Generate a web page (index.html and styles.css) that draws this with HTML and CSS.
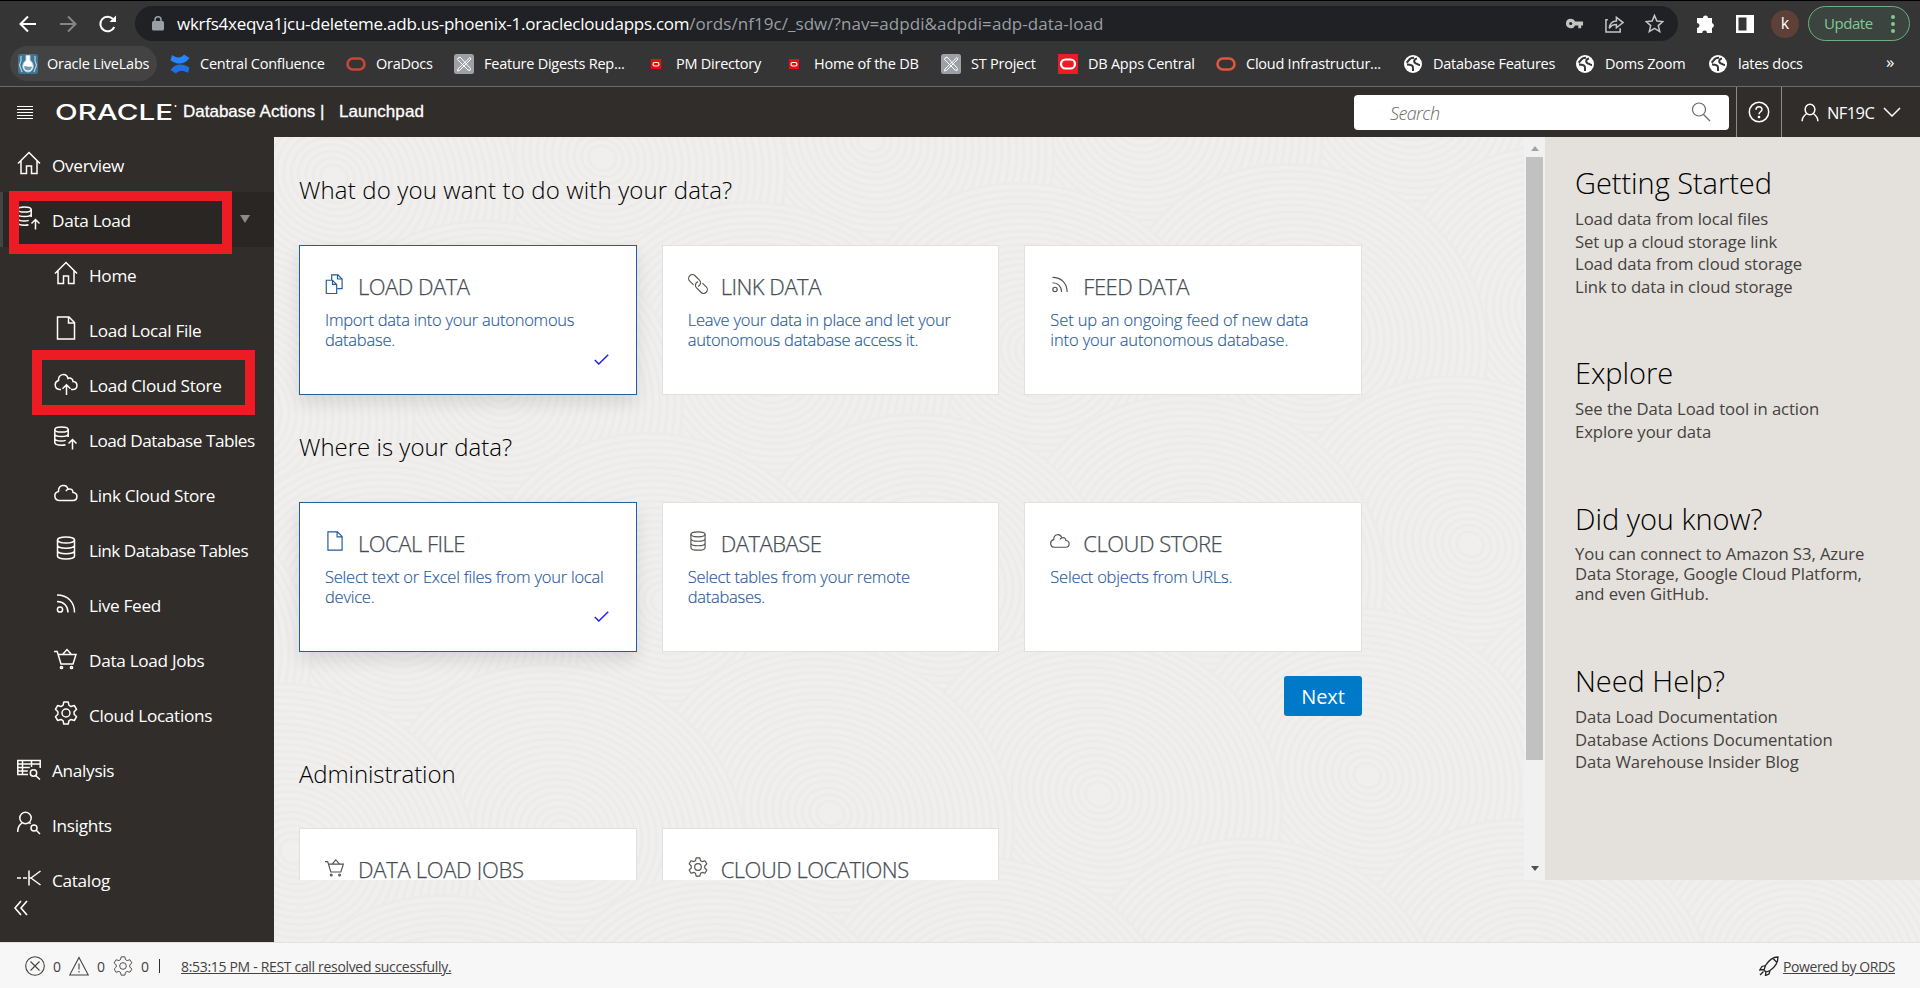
FILE: index.html
```html
<!DOCTYPE html>
<html lang="en">
<head>
<meta charset="utf-8">
<title>Database Actions | Launchpad</title>
<link rel="stylesheet" href="styles.css">
</head>
<body>
<svg class="defs" aria-hidden="true">
  <symbol id="home" viewBox="0 0 24 24"><path d="M1 12.5 12 1.5l11 11M4 10v12.5h5.5V15h5v7.5H20V10"/></symbol>
  <symbol id="file" viewBox="0 0 24 24"><path d="M3.500 1h11.500l5.500 5.500V23H3.500zM14.500 1v6h6"/></symbol>
  <symbol id="copy" viewBox="0 0 24 24"><path d="M1.500 7.500h7.500l5 5V23.500H1.500zM9 7.500v5h5M8 7V1h7.500l5 5V17.500H15M15 1v5h5.500"/></symbol>
  <symbol id="dbup" viewBox="0 0 24 24"><ellipse cx="7.500" cy="3.500" rx="6.700" ry="2.600"/><path d="M.8 3.500V16.500c0 1.600 3 2.700 6.700 2.700 1.600 0 3-.2 4-.5M14.200 3.500V11M.8 8c0 1.500 3 2.500 6.700 2.500S14.200 9.500 14.200 8M.8 12.500c0 1.500 3 2.500 6.700 2.500 1.600 0 3-.2 4.200-.6M18.500 23.500v-9.500M14.500 17.500l4-4 4 4"/></symbol>
  <symbol id="db" viewBox="0 0 24 24"><ellipse cx="12" cy="4" rx="8.500" ry="3"/><path d="M3.500 4v16c0 1.700 3.800 3 8.500 3s8.500-1.300 8.500-3V4M3.500 9.300c0 1.700 3.800 3 8.500 3s8.500-1.300 8.500-3M3.500 14.700c0 1.700 3.800 3 8.500 3s8.500-1.300 8.500-3"/></symbol>
  <symbol id="cloud" viewBox="0 0 24 24"><path d="M5.500 19.500a4.600 4.600 0 0 1-1-9.100C4.200 3.500 12.500 2.300 14 8.300c2.800-1.200 5 .6 5 3.100 5.500.5 5 8.100 0 8.100zM14 8.300c-1 .4-1.700 1-2.100 1.800"/></symbol>
  <symbol id="cloudup" viewBox="0 0 24 24"><path d="M7 18.500H5.500a4.600 4.600 0 0 1-1-9C4.200 2.500 12.500 1.500 14 7.500c2.800-1.200 5 .6 5 3.100 5.500.5 5 7.900 0 7.900h-2M12.500 24V14M8.500 17.800l4-4 4 4"/></symbol>
  <symbol id="feed" viewBox="0 0 24 24"><circle cx="6" cy="18.500" r="2.600"/><path d="M3 10.500c6.500 0 11 4.500 11 11M3 4c10.500 0 17.500 7 17.500 17.500"/></symbol>
  <symbol id="cart" viewBox="0 0 24 24"><path d="M0 5.500h3.200L7 18h12l3-9.500H4.300M8.500 8.500 13 3.500 17.500 8.500"/><circle cx="7.500" cy="21.500" r="1.100"/><circle cx="17.500" cy="21.500" r="1.100"/></symbol>
  <symbol id="gear" viewBox="0 0 24 24"><circle cx="12" cy="12" r="4"/><path d="M9.800 1h4.400l.8 3.400 2 1.100 3.300-1 2.300 3.800-2.500 2.500v2.400l2.500 2.500-2.300 3.800-3.300-1-2 1.100-.8 3.400H9.800L9 19.600l-2-1.100-3.300 1-2.300-3.800 2.500-2.500v-2.400L1.400 8.300l2.300-3.800 3.300 1 2-1.100z" stroke-linejoin="round"/></symbol>
  <symbol id="analysis" viewBox="0 0 24 24"><path d="M11 18.500H.8V4.500h22.400V12M.8 8h22.400M.8 11.500h12M.8 15h10M5.500 4.500v14M14.500 4.500V11M18.500 19.500l4.500 4"/><circle cx="16.500" cy="17" r="3.200"/></symbol>
  <symbol id="insights" viewBox="0 0 24 24"><circle cx="8.500" cy="7" r="5.700"/><path d="M.7 21c0-5 1.500-7.300 4.300-8.900M12.500 11.500l1 1.300M19 19l4 4"/><circle cx="17" cy="17" r="3"/></symbol>
  <symbol id="catalog" viewBox="0 0 24 24"><path d="M0 12h4M6 12h4M12 4.500v15M12 12h2M14 12 23.500 5M14 12 23.500 19"/></symbol>
  <symbol id="link" viewBox="0 0 24 24"><g transform="rotate(45 12 12)"><path d="M9 16.500H2.500a4.500 4.500 0 0 1 0-9H10a4.500 4.500 0 0 1 4 6.500M15 7.500h6.500a4.500 4.500 0 0 1 0 9H14a4.500 4.500 0 0 1-4-6.500"/></g></symbol>
  <symbol id="person" viewBox="0 0 24 24"><ellipse cx="12" cy="8" rx="6.500" ry="7"/><path d="M1.500 23.500c0-5 3-8 6.500-10.500M22.500 23.500c0-5-3-8-6.500-10.500"/></symbol>
  <symbol id="oval" viewBox="0 0 20 14"><rect x="1.500" y="1.500" width="17" height="11" rx="5.500"/></symbol>
  <symbol id="tools" viewBox="0 0 20 20"><rect width="20" height="20" rx="2.500" fill="#9da1a5" stroke="none"/><path d="M4 4l2-1 10.500 11.500-.5 2-2-.5L3.500 5.500zM16 3.500 4 15l-.5 2 2-.5L17 5z" fill="none" stroke="#fff"/></symbol>
  <symbol id="globe" viewBox="0 0 20 20"><circle cx="10" cy="10" r="9" fill="#fff" stroke="none"/><path d="M11 3.800C5.500 3.500 6 7.500 3.500 8.500M4 10.500c3 0 6 .5 6 3v3.500M14 4.500c-3.500.5-3.500 4-1 5 1.800.5 2.500 1.500 4 1.500" fill="none" stroke="#353535" stroke-width="2"/></symbol>
  <symbol id="rings" viewBox="-150 -150 300 300">
    <circle r="149" class="disk"/><circle r="143"/><circle r="137"/><circle r="131"/><circle r="125"/><circle r="119"/><circle r="113"/><circle r="107"/><circle r="101"/><circle r="95"/><circle r="89"/><circle r="83"/><circle r="77"/><circle r="71"/><circle r="65"/><circle r="59"/><circle r="53"/><circle r="47"/><circle r="41"/><circle r="35"/><circle r="29"/><circle r="23"/><circle r="17"/><circle r="11"/>
  </symbol>
</svg>

<div class="browser">
  <div class="toolbar">
    <svg class="nav-ico" viewBox="0 0 20 20"><path d="M18 10H3M10 2.500 2.500 10l7.500 7.500"/></svg>
    <svg class="nav-ico dim" viewBox="0 0 20 20"><path d="M2 10h15M10 2.500 17.500 10 10 17.500"/></svg>
    <svg class="nav-ico" viewBox="0 0 20 20"><path d="M16.300 13A7.300 7.300 0 1 1 15 5"/><path d="M18 1.500V8h-6.500z" fill="#fff" stroke="none"/></svg>
    <div class="address">
      <svg class="lock" viewBox="0 0 12 15"><rect y="5" width="12" height="9.500" rx="1.500" fill="#9aa0a6"/><path d="M3 6V3.800a3 3 0 0 1 6 0V6" fill="none" stroke="#9aa0a6" stroke-width="1.500"/></svg>
      <div class="url"><span class="host">wkrfs4xeqva1jcu-deleteme.adb.us-phoenix-1.oraclecloudapps.com</span><span class="path">/ords/nf19c/_sdw/?nav=adpdi&amp;adpdi=adp-data-load</span></div>
      <svg class="addr-ico" viewBox="0 0 20 20"><path fill="#c4c4c4" stroke="none" fill-rule="evenodd" d="M6 5a5 5 0 1 0 4.600 7H14v3h3v-3h2V8h-8.400A5 5 0 0 0 6 5zm0 3.300a1.700 1.700 0 1 1 0 3.400 1.700 1.700 0 0 1 0-3.400z"/></svg>
      <svg class="addr-ico" viewBox="0 0 20 20"><path d="M3 6H1v13h15v-4M4.500 15c.5-5 3-7.500 7.500-7.700V3.500L19 9l-7 5.500V11c-3.500 0-5.500 1-7.500 4z"/></svg>
      <svg class="addr-ico" viewBox="0 0 20 20"><path d="m10 1.500 2.500 6 6.300.5-4.800 4.200 1.500 6.300L10 15.200l-5.500 3.300L6 12.200 1.200 8l6.300-.5z"/></svg>
    </div>
    <svg class="ext" viewBox="0 0 20 20"><path fill="#fff" d="M7 4a2.500 2.500 0 0 1 5 0h4v5a2.600 2.600 0 0 1 0 5v5h-5a2.400 2.400 0 0 0-4.800 0H1v-5a2.500 2.500 0 0 0 0-5V4z"/></svg>
    <svg class="panel-ico" viewBox="0 0 18 18"><path fill="#fff" fill-rule="evenodd" d="M0 0h18v18H0zM2.500 2.500v13h8v-13z"/></svg>
    <div class="avatar">k</div>
    <div class="update"><span>Update</span><i class="dots"><b></b><b></b><b></b></i></div>
  </div>
  <div class="bookmarks">
    <div class="bm active"><svg viewBox="0 0 20 20"><rect width="20" height="20" rx="3" fill="#3d7593"/><path d="M8 1.500h4v5c5 3 4 11-2 11.500-6-.5-7-8.500-2-11.500z" fill="#fff" stroke="#bcd3df"/><path d="M3 2v5L1.500 11 4 18M17 2v5l1.500 4L16 18" fill="none" stroke="#b5d0dd" stroke-width="1.200"/><path d="M6 12.500c2-1 4 1 8 0-.3 2.500-1.500 4-4 4s-3.700-1.500-4-4z" fill="#6e9bb1"/></svg>Oracle LiveLabs</div>
    <div class="bm"><svg viewBox="0 0 20 20"><path d="M2 1c4 3 9 3.500 12-.5L19.500 4c-5 7-12 7-19 2.500z" fill="#2684ff"/><path d="M18 19c-4-3-9-3.500-12 .5L.5 16c5-7 12-7 19-2.500z" fill="#1f6fe5"/></svg>Central Confluence</div>
    <div class="bm"><svg class="oval red"><use href="#oval"/></svg>OraDocs</div>
    <div class="bm"><svg><use href="#tools"/></svg>Feature Digests Rep...</div>
    <div class="bm"><svg viewBox="0 0 20 20"><path fill="#f20d0d" d="M5 5h10v10H5z"/><rect x="7" y="8.500" width="6" height="3.500" rx="1.700" fill="none" stroke="#fff" stroke-width="1.200"/></svg>PM Directory</div>
    <div class="bm"><svg viewBox="0 0 20 20"><path fill="#f20d0d" d="M5 5h10v10H5z"/><rect x="7" y="8.500" width="6" height="3.500" rx="1.700" fill="none" stroke="#fff" stroke-width="1.200"/></svg>Home of the DB</div>
    <div class="bm"><svg><use href="#tools"/></svg>ST Project</div>
    <div class="bm"><svg viewBox="0 0 20 20"><path fill="#ed1c24" d="M0 0h20v20H0z"/><rect x="3" y="5.500" width="14" height="9" rx="4.500" fill="none" stroke="#fff" stroke-width="2.200"/></svg>DB Apps Central</div>
    <div class="bm"><svg class="oval red2"><use href="#oval"/></svg>Cloud Infrastructur...</div>
    <div class="bm"><svg><use href="#globe"/></svg>Database Features</div>
    <div class="bm"><svg><use href="#globe"/></svg>Doms Zoom</div>
    <div class="bm"><svg><use href="#globe"/></svg>lates docs</div>
    <div class="more">»</div>
  </div>
</div>

<header class="app-header">
  <div class="burger"><i></i><i></i><i></i><i></i><i></i></div>
  <svg class="logo" viewBox="0 0 124 24"><text x="0" y="20" textLength="118" lengthAdjust="spacingAndGlyphs">ORACLE</text><circle cx="120.500" cy="6" r="1"/></svg>
  <div class="brand">Database Actions |</div>
  <div class="page-name">Launchpad</div>
  <div class="search"><span>Search</span><svg viewBox="0 0 20 20"><circle cx="8" cy="7.500" r="6.500"/><path d="m12.500 12.500 6.500 6.500"/></svg></div>
  <div class="help"><svg viewBox="0 0 22 22"><circle cx="11" cy="11" r="9.700"/><path d="M8 8.800c0-4 6-4 6-.3 0 2.300-3 2.300-3 4.800"/><circle cx="11" cy="16" r=".6"/></svg></div>
  <div class="user"><svg class="u-ico"><use href="#person"/></svg><span>NF19C</span><svg class="chev" viewBox="0 0 18 10"><path d="m1 1 8 8 8-8"/></svg></div>
</header>

<div class="workspace">
  <nav class="sidebar">
    <div class="item"><svg><use href="#home"/></svg>Overview</div>
    <div class="item selected"><svg><use href="#dbup"/></svg>Data Load<b class="caret"></b></div>
    <div class="item sub"><svg><use href="#home"/></svg>Home</div>
    <div class="item sub"><svg><use href="#file"/></svg>Load Local File</div>
    <div class="item sub"><svg><use href="#cloudup"/></svg>Load Cloud Store</div>
    <div class="item sub long"><svg><use href="#dbup"/></svg>Load Database Tables</div>
    <div class="item sub"><svg><use href="#cloud"/></svg>Link Cloud Store</div>
    <div class="item sub long"><svg><use href="#db"/></svg>Link Database Tables</div>
    <div class="item sub"><svg><use href="#feed"/></svg>Live Feed</div>
    <div class="item sub"><svg><use href="#cart"/></svg>Data Load Jobs</div>
    <div class="item sub"><svg><use href="#gear"/></svg>Cloud Locations</div>
    <div class="item"><svg><use href="#analysis"/></svg>Analysis</div>
    <div class="item"><svg><use href="#insights"/></svg>Insights</div>
    <div class="item"><svg><use href="#catalog"/></svg>Catalog</div>
    <svg class="collapse" viewBox="0 0 14 16"><path d="M7 1 1 8l6 7M13 1 7 8l6 7"/></svg>
    <div class="mark mark-load"></div>
    <div class="mark mark-cloud"></div>
  </nav>

  <div class="stage">
    <svg class="texture" width="1646" height="805">
      <defs><pattern id="waves" width="380" height="230" patternUnits="userSpaceOnUse" patternTransform="translate(60 40) rotate(24) scale(1.25 1.1)">
        <use href="#rings" x="40" y="-265" width="300" height="300"/>
        <use href="#rings" x="-150" y="-150" width="300" height="300"/><use href="#rings" x="230" y="-150" width="300" height="300"/>
        <use href="#rings" x="40" y="-35" width="300" height="300"/>
        <use href="#rings" x="-150" y="80" width="300" height="300"/><use href="#rings" x="230" y="80" width="300" height="300"/>
        <use href="#rings" x="40" y="195" width="300" height="300"/>
      </pattern></defs>
      <rect width="1646" height="805" fill="url(#waves)" stroke="none"/>
    </svg>
    <div class="panes">
      <main class="content">
        <h2 class="first">What do you want to do with your data?</h2>
        <div class="cards">
          <section class="card chosen"><div class="title"><svg><use href="#copy"/></svg>LOAD DATA</div><p>Import data into your autonomous<br>database.</p><svg class="check" viewBox="0 0 15 11"><path d="m.8 6 4 4L14.200.8"/></svg></section>
          <section class="card"><div class="title"><svg class="thin"><use href="#link"/></svg>LINK DATA</div><p>Leave your data in place and let your<br>autonomous database access it.</p></section>
          <section class="card"><div class="title"><svg><use href="#feed"/></svg>FEED DATA</div><p class="loose">Set up an ongoing feed of new data<br>into your autonomous database.</p></section>
        </div>
        <h2 class="second">Where is your data?</h2>
        <div class="cards">
          <section class="card chosen"><div class="title"><svg><use href="#file"/></svg>LOCAL FILE</div><p>Select text or Excel files from your local<br>device.</p><svg class="check" viewBox="0 0 15 11"><path d="m.8 6 4 4L14.200.8"/></svg></section>
          <section class="card"><div class="title"><svg><use href="#db"/></svg>DATABASE</div><p>Select tables from your remote<br>databases.</p></section>
          <section class="card"><div class="title"><svg><use href="#cloud"/></svg>CLOUD STORE</div><p>Select objects from URLs.</p></section>
        </div>
        <div class="actions"><button class="next">Next</button></div>
        <h2 class="third">Administration</h2>
        <div class="cards">
          <section class="card"><div class="title jobs"><svg><use href="#cart"/></svg>DATA LOAD JOBS</div></section>
          <section class="card"><div class="title"><svg><use href="#gear"/></svg>CLOUD LOCATIONS</div></section>
        </div>
      </main>
      <div class="scroll"><i class="up"></i><i class="thumb"></i><i class="down"></i></div>
      <aside class="aside">
        <h3>Getting Started</h3>
        <ul><li>Load data from local files</li><li>Set up a cloud storage link</li><li>Load data from cloud storage</li><li>Link to data in cloud storage</li></ul>
        <h3>Explore</h3>
        <ul><li>See the Data Load tool in action</li><li>Explore your data</li></ul>
        <h3>Did you know?</h3>
        <p>You can connect to Amazon S3, Azure<br>Data Storage, Google Cloud Platform,<br>and even GitHub.</p>
        <h3>Need Help?</h3>
        <ul><li>Data Load Documentation</li><li>Database Actions Documentation</li><li>Data Warehouse Insider Blog</li></ul>
      </aside>
    </div>
  </div>
</div>

<footer class="status">
  <svg viewBox="0 0 20 20"><circle cx="10" cy="10" r="9.300"/><path d="m5.500 5.500 9 9M14.500 5.500l-9 9"/></svg><span>0</span>
  <svg viewBox="0 0 20 20"><path d="M10 1.500 19.300 19H.7zM10 7.500v6M10 15v1.500"/></svg><span>0</span>
  <svg><use href="#gear"/></svg><span>0</span>
  <i class="bar"></i>
  <a class="log">8:53:15 PM - REST call resolved successfully.</a>
  <svg class="rocket" viewBox="0 0 20 20"><path d="M19 1c-5 0-8.500 2-12.500 8.500L5 14l2 2 4-1.500C17 10.500 19 6 19 1zM14 2.500 18 6.500M6.500 9.500 3 10.500.7 14l4.300-.5M11 14.500l-1 3.500-3.500 1.500L7 15.500M4.500 15.500 1 19"/></svg>
  <a class="ords">Powered by ORDS</a>
</footer>
</body>
</html>
```
FILE: styles.css
```css
* { box-sizing: border-box; }
body { margin: 0; width: 1920px; height: 988px; overflow: hidden; font-family: "Open Sans", sans-serif; background: #f0efed; white-space: nowrap; }
svg { fill: none; stroke: currentColor; flex: none; display: block; }
h2, h3, p, ul { margin: 0; padding: 0; }
li { list-style: none; }
.defs { position: absolute; width: 0; height: 0; }

/* Browser frame */
.browser { height: 87px; background: #353535; border-top: 1px solid #000; border-bottom: 1px solid #6a6a6a; color: #fff; }
.toolbar { display: flex; align-items: center; height: 45px; padding: 0 10px 0 18px; }
.nav-ico { width: 20px; height: 20px; margin-right: 20px; stroke-width: 2; }
.nav-ico.dim { color: #868686; }
.nav-ico:nth-child(3) { margin-right: 17px; }
.address { width: 1543px; height: 35px; border-radius: 18px; background: #202124; display: flex; align-items: center; padding: 0 14px 0 17px; }
.lock { width: 12px; height: 15px; margin-right: 13px; stroke: none; }
.url { flex: 1; font-size: 17px; line-height: 30px; }
.host { letter-spacing: -.26px; }
.path { color: #9a9ea3; letter-spacing: .05px; }
.addr-ico { width: 19px; height: 19px; margin-left: 21px; color: #c4c4c4; stroke-width: 1.6; }
.ext { width: 20px; height: 20px; margin-left: 18px; stroke: none; }
.panel-ico { width: 18px; height: 18px; margin-left: 20px; stroke: none; }
.avatar { width: 28px; height: 28px; margin: 0 9px 0 17px; border-radius: 50%; background: #5d4037; font-size: 16px; line-height: 27px; text-align: center; }
.update { width: 102px; height: 35px; border: 1.5px solid #6fae82; border-radius: 18px; background: #3b443f; color: #81c995; display: flex; align-items: center; padding: 0 0 2px 15px; font-size: 15px; letter-spacing: -.45px; }
.dots { display: grid; gap: 3px; margin: 2px 0 0 18px; }
.dots b { width: 4px; height: 4px; border-radius: 50%; background: #81c995; }
.bookmarks { display: grid; grid-template-columns: 152px 176px 108px 192px 138px 157px 117px 158px 187px 172px 133px 178px 30px; height: 35px; padding-left: 18px; }
.bm { display: flex; align-items: center; gap: 10px; font-size: 14.5px; letter-spacing: -.24px; height: 35px; }
.bm svg { width: 20px; height: 20px; stroke: none; }
.bm.active { margin-left: -8px; padding-left: 8px; width: 147px; border-radius: 18px; background: #434343; gap: 9px; }
.bm .oval { height: 14px; stroke-width: 2.6; }
.bm .red { stroke: #c74634; }
.bm .red2 { stroke: #e0563f; }
.more { font-size: 17px; line-height: 32px; }

/* Application header */
.app-header { height: 50px; background: #312d2a; color: #fff; display: flex; align-items: center; font: 17px "Liberation Sans", sans-serif; }
.burger { display: grid; gap: 2px; width: 16px; margin: 0 22px 0 17px; }
.burger i { height: 1px; background: #fff; }
.logo { width: 124px; height: 24px; margin-right: 4px; stroke: none; fill: #fff; }
.logo text { font: 500 22px Inter, sans-serif; }
.brand { width: 156px; letter-spacing: 0; -webkit-text-stroke: .3px #fff; }
.page-name { flex: 1; letter-spacing: .1px; -webkit-text-stroke: .3px #fff; }
.search { width: 375px; height: 35px; margin-right: 7px; border-radius: 4px; background: #fff; color: #6b6865; display: flex; align-items: center; justify-content: space-between; padding: 0 18px 0 36px; font: italic 300 18px "Open Sans", sans-serif; letter-spacing: -.6px; }
.search span { padding-top: 2px; }
.search svg { width: 20px; height: 20px; stroke-width: 1.200; }
.help { height: 50px; width: 46px; border: solid #8d8b89; border-width: 0 1px; display: flex; align-items: center; justify-content: center; }
.help svg { width: 22px; height: 22px; stroke-width: 1.500; }
.user { width: 138px; display: flex; align-items: center; padding-left: 19px; font: 16.500px "Open Sans", sans-serif; letter-spacing: -.6px; }
.u-ico { width: 18px; height: 19px; stroke-width: 2; margin-right: 8px; }
.user span { width: 56px; }
.chev { width: 18px; height: 10px; stroke-width: 1.500; }

/* Sidebar */
.workspace { display: flex; height: 805px; }
.sidebar { position: relative; width: 274px; background: #312d2a; color: #fff; }
.item { height: 55px; display: flex; align-items: center; gap: 11px; padding: 1px 0 0 17px; font-size: 17.200px; letter-spacing: -.3px; }
.item svg { width: 24px; height: 24px; stroke-width: 1.500; margin-top: -4px; }
.item.sub { padding-left: 54px; }
.item.long { letter-spacing: -.5px; }
.item.selected { background: #2a2623; border-left: 3px solid #444; padding-left: 14px; }
.caret { margin: -2px 24px 0 auto; border: solid transparent; border-width: 8px 5.500px 0; border-top-color: #8d8b89; }
.collapse { width: 14px; height: 16px; margin: -7px 0 0 14px; stroke-width: 1.600; }
.mark { position: absolute; border: 10px solid #ed1c24; width: 223px; }
.mark-load { left: 9px; top: 54px; height: 63px; }
.mark-cloud { left: 32px; top: 213px; height: 65px; }

/* Main stage */
.stage { position: relative; width: 1646px; }
.texture { position: absolute; left: 0; top: 0; }
#rings circle { stroke: #ecebe9; stroke-width: 2.200; }
#rings .disk { fill: #f0efed; }
.panes { position: relative; display: flex; height: 743px; overflow: hidden; }
.content { width: 1250px; padding: 37px 0 0 25px; }
.content h2 { font-size: 24px; font-weight: 300; line-height: 32px; color: #000; }
.content .first { letter-spacing: .14px; }
.second { margin-top: 36px; }
.third { margin-top: 42px; letter-spacing: -.1px; }
.cards { display: grid; grid-template-columns: repeat(3, 1fr); gap: 25px; width: 1063px; margin-top: 39px; }
.third + .cards { margin-top: 38px; }
.card { position: relative; height: 150px; background: #fff; border: 1px solid #dfe0e0; padding: 25px 0 0 25px; color: #1f5a9a; }
.card.chosen { border-color: #2160a0; box-shadow: 0 8px 16px rgba(0, 0, 0, .1); }
.title { display: flex; gap: 13px; font-size: 22px; font-weight: 300; line-height: 30px; letter-spacing: -.5px; color: #454c54; -webkit-text-stroke: .25px #454c54; }
.title.jobs { letter-spacing: -.3px; }
.title svg { width: 20px; height: 20px; margin-top: 3px; stroke-width: 1.400; color: #565350; }
.chosen .title svg { color: #1f5a9a; }
.card p { margin-top: 9px; font-size: 16.500px; font-weight: 300; line-height: 20px; letter-spacing: -.24px; -webkit-text-stroke: .15px #1f5a9a; }
.card .loose { letter-spacing: -.13px; }
.check { position: absolute; right: 27px; top: 108px; width: 15px; height: 11px; color: #2222ee; stroke-width: 1.500; }
.actions { display: flex; justify-content: flex-end; width: 1063px; margin-top: 24px; }
.next { width: 78px; height: 40px; padding: 1px 0 0; border: 0; border-radius: 3px; background: #0079c8; color: #fff; font: 20px "Open Sans", sans-serif; letter-spacing: -.1px; }
.scroll { width: 21px; background: #f1f1f1; display: flex; flex-direction: column; align-items: center; }
.up, .down { border: solid transparent; border-width: 0 4.500px 5px; border-bottom-color: #a3a3a3; margin: 9px 0 6px; }
.thumb { width: 17px; height: 603px; background: #c1c1c1; }
.down { border-width: 5px 4.500px 0; border-top-color: #505050; margin: auto 0 9px; }
.aside { width: 375px; padding: 28px 0 0 30px; background: #e4e1dc; color: #45423f; font-size: 16.700px; letter-spacing: -.08px; }
.aside h3 { font-size: 29px; font-weight: 300; line-height: 36px; color: #000; margin-bottom: 7px; letter-spacing: -.05px; }
.aside li { line-height: 22.500px; }
.aside p { line-height: 20px; }
.aside ul + h3 { margin-top: 57px; }
.aside ul ~ ul + h3 { margin-top: 58px; }
.aside p + h3 { margin-top: 59px; }

/* Status bar */
.status { height: 46px; border-top: 1px solid #e0e2e1; background: #f7f7f7; color: #45423f; display: flex; align-items: center; padding: 1px 25px 0 25px; font-size: 14px; letter-spacing: -.32px; }
.status svg { width: 20px; height: 20px; stroke-width: 1.100; }
.status span { width: 16px; margin-left: 8px; }
.bar { width: 1px; height: 14px; background: #312d2a; margin-left: 2px; }
.log { margin-left: 21px; text-decoration: underline; }
.ords { letter-spacing: -.4px; text-decoration: underline; margin-left: 4px; }
.status .rocket { margin-left: auto; color: #222; stroke-width: 1.300; }
```
